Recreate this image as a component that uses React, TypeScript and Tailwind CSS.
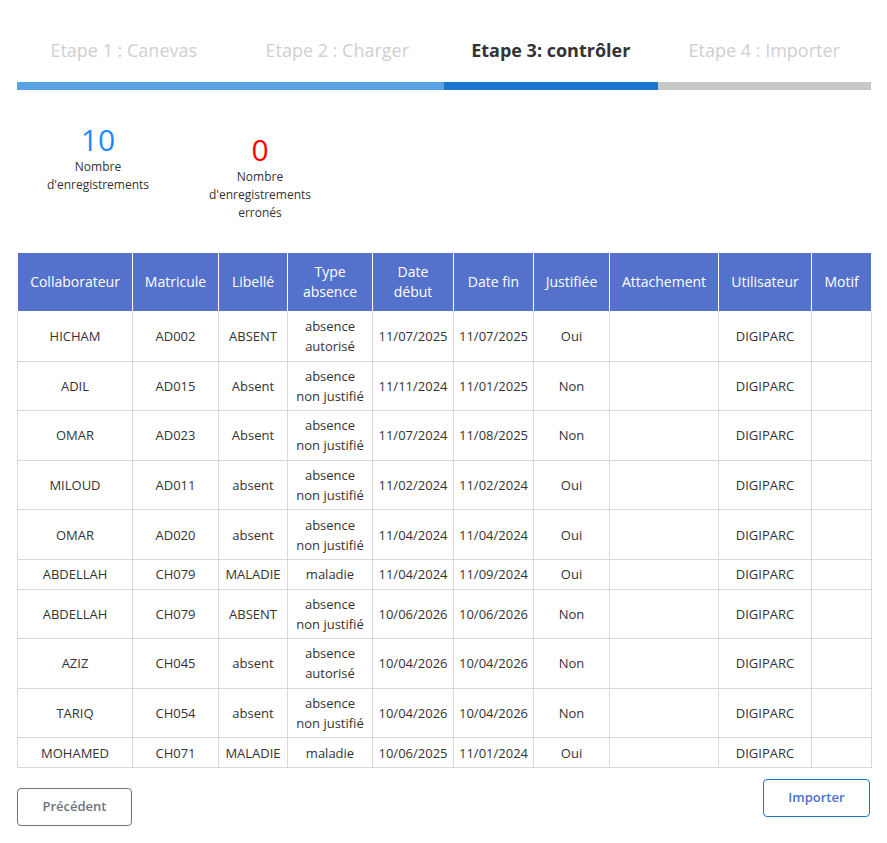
import React from 'react';

const STEPS = [
  { label: 'Etape 1 : Canevas', bar: 'bg-[#5aa2e6]', text: 'text-[#cfcfcf]' },
  { label: 'Etape 2 : Charger', bar: 'bg-[#5aa2e6]', text: 'text-[#cfcfcf]' },
  { label: 'Etape 3: contrôler', bar: 'bg-[#1976d2]', text: 'text-[#333333] font-bold' },
  { label: 'Etape 4 : Importer', bar: 'bg-[#c8c8c8]', text: 'text-[#cfcfcf]' },
];

const COLUMNS = [
  { label: 'Collaborateur', w: 'w-[115px]' },
  { label: 'Matricule', w: 'w-[86px]' },
  { label: 'Libellé', w: 'w-[69px]' },
  { label: 'Type absence', w: 'w-[85px]' },
  { label: 'Date début', w: 'w-[81px]' },
  { label: 'Date fin', w: 'w-[80px]' },
  { label: 'Justifiée', w: 'w-[76px]' },
  { label: 'Attachement', w: 'w-[109px]' },
  { label: 'Utilisateur', w: 'w-[93px]' },
  { label: 'Motif', w: 'w-[60px]' },
];

type Row = [string, string, string, string, string, string, string];

const ROWS: Row[] = [
  ['HICHAM', 'AD002', 'ABSENT', 'absence autorisé', '11/07/2025', '11/07/2025', 'Oui'],
  ['ADIL', 'AD015', 'Absent', 'absence non justifié', '11/11/2024', '11/01/2025', 'Non'],
  ['OMAR', 'AD023', 'Absent', 'absence non justifié', '11/07/2024', '11/08/2025', 'Non'],
  ['MILOUD', 'AD011', 'absent', 'absence non justifié', '11/02/2024', '11/02/2024', 'Oui'],
  ['OMAR', 'AD020', 'absent', 'absence non justifié', '11/04/2024', '11/04/2024', 'Oui'],
  ['ABDELLAH', 'CH079', 'MALADIE', 'maladie', '11/04/2024', '11/09/2024', 'Oui'],
  ['ABDELLAH', 'CH079', 'ABSENT', 'absence non justifié', '10/06/2026', '10/06/2026', 'Non'],
  ['AZIZ', 'CH045', 'absent', 'absence autorisé', '10/04/2026', '10/04/2026', 'Non'],
  ['TARIQ', 'CH054', 'absent', 'absence non justifié', '10/04/2026', '10/04/2026', 'Non'],
  ['MOHAMED', 'CH071', 'MALADIE', 'maladie', '10/06/2025', '11/01/2024', 'Oui'],
];

function Stat({ value, color, label, className = '' }: { value: string; color: string; label: string; className?: string }) {
  return (
    <div className={`flex w-[130px] flex-col items-center text-center ${className}`}>
      <div className={`text-[30px] leading-[36px] ${color}`}>{value}</div>
      <div className="text-[12px] leading-[18px] text-[#333333]">{label}</div>
    </div>
  );
}

export default function App() {
  return (
    <div className="min-h-[843px] bg-white pl-[17px] pr-[16px] pt-[38px] font-['Open_Sans',sans-serif]">
      {/* Stepper */}
      <div className="grid grid-cols-4">
        {STEPS.map((s) => (
          <div key={s.label} className="flex flex-col">
            <div className={`text-center text-[18px] leading-[24px] ${s.text}`}>{s.label}</div>
            <div className={`mt-[20px] h-[8px] ${s.bar}`} />
          </div>
        ))}
      </div>

      {/* Counters */}
      <div className="mt-[32px] flex items-start gap-[32px] pl-[16px]">
        <Stat value="10" color="text-[#1a8cff]" label="Nombre d'enregistrements" />
        <Stat value="0" color="text-[#ff0000]" label="Nombre d'enregistrements erronés" className="mt-[10px]" />
      </div>

      {/* Records */}
      <table className="mt-[30px] w-[854px] table-fixed border-collapse text-center">
        <thead>
          <tr className="bg-[#5472cc]">
            {COLUMNS.map((c) => (
              <th
                key={c.label}
                className={`${c.w} border border-white px-[5px] py-[9px] text-[14px] font-normal leading-5 text-white`}
              >
                {c.label}
              </th>
            ))}
          </tr>
        </thead>
        <tbody>
          {ROWS.map((r, i) => (
            <tr key={i} className="text-[13px] leading-5 text-[#333333]">
              {[...r, '', 'DIGIPARC', ''].map((cell, j) => (
                <td key={j} className="border border-[#d9d9d9] px-[5px] py-[4.3px]">
                  {cell}
                </td>
              ))}
            </tr>
          ))}
        </tbody>
      </table>

      {/* Actions */}
      <div className="flex items-start justify-between">
        <button className="mt-[20px] h-[38px] w-[115px] rounded-[4px] border border-[#6c757d] text-[13px] font-semibold text-[#6c757d]">
          Précédent
        </button>
        <button className="mt-[11px] mr-[1px] h-[38px] w-[107px] rounded-[4px] border border-[#1976d2] text-[13px] font-semibold text-[#4a6fd0]">
          Importer
        </button>
      </div>
    </div>
  );
}
